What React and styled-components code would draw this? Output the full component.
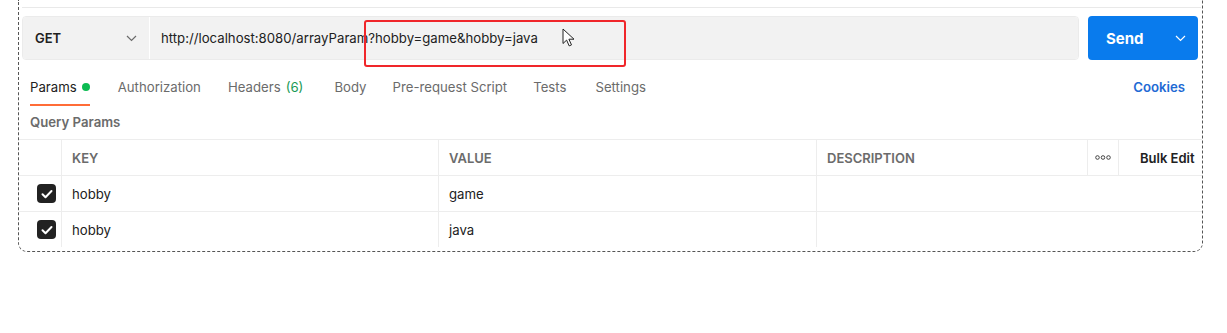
import styled, { createGlobalStyle } from "styled-components"

const Global = createGlobalStyle`
  body {
    margin: 0;
    background: #fff;
    font-family: Inter, "Noto Sans", sans-serif;
    color: #212121;
  }
`

const Page = styled.div`
  position: relative;
  width: 1227px;
  height: 333px;
`

const Frame = styled.div`
  margin-left: 18px;
  width: 1185px;
  height: 252px;
  border: 1px dashed #555;
  border-top: none;
  border-radius: 0 0 9px 9px;
  box-sizing: border-box;
  display: flex;
  flex-direction: column;
`

const TopLine = styled.div`
  margin: 7px 1px 0 3px;
  height: 1px;
  background: #e9e9e9;
`

const RequestBar = styled.div`
  display: flex;
  margin: 8px 4px 0 3px;
  height: 44px;
  gap: 9px;
`

const InputGroup = styled.div`
  flex: 1;
  display: flex;
  gap: 1px;
  border-radius: 4px;
  overflow: hidden;
  border: 1px solid #ebebeb;
`

const Method = styled.div`
  width: 126px;
  background: #f2f2f2;
  display: flex;
  align-items: center;
  justify-content: space-between;
  padding: 0 12px;
  box-sizing: border-box;
  font-weight: 600;
  font-size: 13px;
  color: #212121;
`

const Url = styled.div`
  flex: 1;
  background: #f2f2f2;
  display: flex;
  align-items: center;
  padding-left: 11px;
  font-size: 13.2px;
  color: #212121;
`

const SendButton = styled.div`
  width: 110px;
  background: #097bed;
  border-radius: 4px;
  display: flex;
  align-items: center;
  justify-content: space-between;
  padding: 0 12px 0 18px;
  box-sizing: border-box;
  color: #fff;
  font-weight: 700;
  font-size: 15px;
`

const Tabs = styled.div`
  display: flex;
  align-items: flex-start;
  margin: 19px 0 0 11px;
  height: 28px;
  padding-right: 17px;
`

const Tab = styled.div`
  font-size: 13.2px;
  color: ${p => (p.active ? "#212121" : "#6b6b6b")};
  margin-right: ${p => p.gap}px;
  display: flex;
  align-items: center;
  gap: 5px;
  padding-bottom: 9px;
  border-bottom: 2px solid ${p => (p.active ? "#ff6c37" : "transparent")};
`

const Dot = styled.span`
  width: 8px;
  height: 8px;
  border-radius: 50%;
  background: #0cbb52;
`

const Count = styled.span`
  color: #1a9a55;
`

const Cookies = styled.div`
  margin-left: auto;
  font-size: 13.2px;
  font-weight: 600;
  color: #1e6ad4;
`

const SectionTitle = styled.div`
  margin: 7px 0 0 11px;
  font-size: 13.2px;
  font-weight: 600;
  color: #6b6b6b;
  height: 17px;
`

const Table = styled.div`
  margin-top: 8px;
  display: grid;
  grid-template-columns: 42px 377px 378px 1fr;
  border-top: 1px solid #ededed;
`

const Cell = styled.div`
  height: 35px;
  display: flex;
  align-items: center;
  padding-left: ${p => (p.check ? 0 : 10)}px;
  justify-content: ${p => (p.check ? "flex-end" : "flex-start")};
  padding-right: ${p => (p.check ? 5 : 0)}px;
  border-bottom: ${p => (p.last ? "none" : "1px solid #ededed")};
  border-left: ${p => (p.check ? "none" : "1px solid #ededed")};
  font-size: 13.2px;
  color: #212121;
`

const HeadCell = styled(Cell)`
  color: #6b6b6b;
  font-weight: 600;
  font-size: 13px;
`

const HeadTail = styled.div`
  display: flex;
  height: 35px;
  border-left: 1px solid #ededed;
  border-bottom: 1px solid #ededed;
`

const Desc = styled.div`
  flex: 1;
  display: flex;
  align-items: center;
  padding-left: 10px;
  color: #6b6b6b;
  font-weight: 600;
  font-size: 13px;
`

const More = styled.div`
  width: 30px;
  border-left: 1px solid #ededed;
  display: flex;
  align-items: center;
  justify-content: center;
`

const Bulk = styled.div`
  width: 84px;
  border-left: 1px solid #ededed;
  display: flex;
  align-items: center;
  padding-left: 21px;
  box-sizing: border-box;
  font-weight: 600;
  font-size: 13px;
  color: #212121;
  white-space: nowrap;
  overflow: hidden;
`

const Box = styled.span`
  width: 19px;
  height: 19px;
  border-radius: 4px;
  background: #222;
  display: flex;
  align-items: center;
  justify-content: center;
`

const Highlight = styled.div`
  position: absolute;
  left: 364px;
  top: 20px;
  width: 262px;
  height: 47px;
  border: 2px solid #f0262a;
  border-radius: 3px;
  box-sizing: border-box;
`

const Cursor = styled.svg`
  position: absolute;
  left: 562px;
  top: 28px;
`

const Chevron = ({ color = "#6b6b6b" }) => (
  <svg width="11" height="7" viewBox="0 0 11 7">
    <path d="M1 1l4.5 4.5L10 1" fill="none" stroke={color} strokeWidth="1.2" />
  </svg>
)

const Check = () => (
  <Box>
    <svg width="12" height="10" viewBox="0 0 12 10">
      <path d="M1.5 5.2l3 3L10.5 2" fill="none" stroke="#fff" strokeWidth="2" strokeLinecap="round" strokeLinejoin="round" />
    </svg>
  </Box>
)

const rows = [
  { key: "hobby", value: "game" },
  { key: "hobby", value: "java" },
]

export default function App() {
  return (
    <Page>
      <Global />
      <Frame>
        <TopLine />
        <RequestBar>
          <InputGroup>
            <Method>
              GET
              <Chevron />
            </Method>
            <Url>http://localhost:8080/arrayParam?hobby=game&amp;hobby=java</Url>
          </InputGroup>
          <SendButton>
            Send
            <Chevron color="#fff" />
          </SendButton>
        </RequestBar>
        <Tabs>
          <Tab active gap={28}>Params <Dot /></Tab>
          <Tab gap={27}>Authorization</Tab>
          <Tab gap={31}>Headers <Count>(6)</Count></Tab>
          <Tab gap={26}>Body</Tab>
          <Tab gap={26}>Pre-request Script</Tab>
          <Tab gap={29}>Tests</Tab>
          <Tab gap={0}>Settings</Tab>
          <Cookies>Cookies</Cookies>
        </Tabs>
        <SectionTitle>Query Params</SectionTitle>
        <Table>
          <HeadCell check />
          <HeadCell>KEY</HeadCell>
          <HeadCell>VALUE</HeadCell>
          <HeadTail>
            <Desc>DESCRIPTION</Desc>
            <More>
              <svg width="16" height="5" viewBox="0 0 16 5">
                <circle cx="2.5" cy="2.5" r="1.8" fill="none" stroke="#444" strokeWidth="1" />
                <circle cx="8" cy="2.5" r="1.8" fill="none" stroke="#444" strokeWidth="1" />
                <circle cx="13.5" cy="2.5" r="1.8" fill="none" stroke="#444" strokeWidth="1" />
              </svg>
            </More>
            <Bulk>Bulk Edit</Bulk>
          </HeadTail>
          {rows.map((r, i) => {
            const last = i === rows.length - 1
            return [
              <Cell check last={last} key={i + "c"}><Check /></Cell>,
              <Cell last={last} key={i + "k"}>{r.key}</Cell>,
              <Cell last={last} key={i + "v"}>{r.value}</Cell>,
              <Cell last={last} key={i + "d"} />,
            ]
          })}
        </Table>
      </Frame>
      <Highlight />
      <Cursor width="13" height="19" viewBox="0 0 13 19">
        <path d="M1 1v14.5l3.6-3.4 2.6 5.8 2.3-1-2.6-5.7h5.1z" fill="#fff" stroke="#222" strokeWidth="1" strokeLinejoin="round" />
      </Cursor>
    </Page>
  )
}
